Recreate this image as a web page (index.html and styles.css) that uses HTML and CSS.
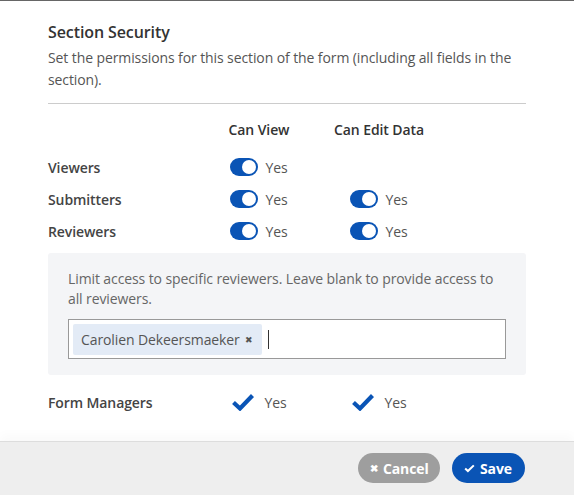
FILE: index.html
```html
<!DOCTYPE html>
<html lang="en">
<head>
<meta charset="utf-8">
<title>Section Security</title>
<link rel="stylesheet" href="styles.css">
</head>
<body>
<div class="modal">
  <div class="content">
    <h2 class="title">Section Security</h2>
    <p class="desc">Set the permissions for this section of the form (including all fields in the section).</p>
    <hr class="rule">
    <div class="perms">
      <div class="head"></div>
      <div class="head center">Can View</div>
      <div class="head center">Can Edit Data</div>

      <div class="label">Viewers</div>
      <div class="cell"><span class="toggle"><span class="knob"></span></span><span class="yes">Yes</span></div>
      <div class="cell"></div>

      <div class="label">Submitters</div>
      <div class="cell"><span class="toggle"><span class="knob"></span></span><span class="yes">Yes</span></div>
      <div class="cell"><span class="toggle"><span class="knob"></span></span><span class="yes">Yes</span></div>

      <div class="label">Reviewers</div>
      <div class="cell"><span class="toggle"><span class="knob"></span></span><span class="yes">Yes</span></div>
      <div class="cell"><span class="toggle"><span class="knob"></span></span><span class="yes">Yes</span></div>
    </div>

    <div class="limit">
      <p class="limit-text">Limit access to specific reviewers. Leave blank to provide access to all reviewers.</p>
      <div class="picker">
        <span class="tag">Carolien Dekeersmaeker <span class="tag-x">&#x2716;</span></span>
        <span class="caret"></span>
      </div>
    </div>

    <div class="perms managers">
      <div class="label">Form Managers</div>
      <div class="cell">
        <svg class="check" viewBox="0 0 24 18" width="24" height="18"><path d="M2.5 9.5 L9 15.5 L21.5 2.5" fill="none" stroke="#0a54b5" stroke-width="4.2" stroke-linejoin="miter" stroke-linecap="butt"/></svg>
        <span class="yes">Yes</span>
      </div>
      <div class="cell">
        <svg class="check" viewBox="0 0 24 18" width="24" height="18"><path d="M2.5 9.5 L9 15.5 L21.5 2.5" fill="none" stroke="#0a54b5" stroke-width="4.2" stroke-linejoin="miter" stroke-linecap="butt"/></svg>
        <span class="yes">Yes</span>
      </div>
    </div>
  </div>
  <div class="footer">
    <button class="btn btn-cancel"><span class="btn-ico">&#x2716;</span>Cancel</button>
    <button class="btn btn-save"><svg class="btn-svg" viewBox="0 0 14 12" width="13" height="11"><path d="M1.5 6 L5 9.3 L12.5 2" fill="none" stroke="#fff" stroke-width="2.6"/></svg>Save</button>
  </div>
</div>
</body>
</html>
```

FILE: styles.css
```css
* { box-sizing: border-box; }
html, body { margin: 0; padding: 0; background: #fff; }
body {
  font-family: "Open Sans", "Noto Sans", sans-serif;
  font-size: 14px;
  letter-spacing: -0.1px;
  color: #555;
}
.modal {
  width: 574px;
  height: 495px;
  border-top: 1px solid #666;
  display: flex;
  flex-direction: column;
}
.content {
  flex: 1;
  padding: 20px 48px 0 48px;
}
.title {
  margin: 0;
  font-size: 16px;
  line-height: 22px;
  font-weight: 600;
  color: #333;
}
.desc {
  margin: 4px 0 0 0;
  line-height: 22px;
  color: #555;
}
.rule {
  margin: 12px 0 0 0;
  border: 0;
  border-top: 1px solid #ccc;
}
.perms {
  display: grid;
  grid-template-columns: 151px 120px 120px;
  margin-top: 16px;
}
.head {
  font-weight: 600;
  color: #333;
  line-height: 20px;
  margin-bottom: 11px;
}
.center { text-align: center; }
.label {
  font-weight: 600;
  color: #444;
  height: 32px;
  display: flex;
  align-items: center;
}
.cell {
  height: 32px;
  display: flex;
  align-items: center;
  justify-content: center;
  gap: 7px;
}
.toggle {
  width: 28px;
  height: 18px;
  border-radius: 9px;
  background: #0a54b5;
  position: relative;
  display: inline-block;
}
.knob {
  position: absolute;
  right: 2px;
  top: 2px;
  width: 14px;
  height: 14px;
  border-radius: 50%;
  background: #fff;
}
.yes { color: #555; }
.limit {
  margin-top: 6px;
  background: #f4f5f7;
  border-radius: 3px;
  padding: 16px 20px 16px 20px;
}
.limit-text {
  margin: 0;
  line-height: 20px;
  color: #666;
}
.picker {
  margin-top: 10px;
  height: 40px;
  background: #fff;
  border: 1px solid #999;
  display: flex;
  align-items: center;
  padding-left: 4px;
}
.tag {
  background: #e3ebf6;
  border-radius: 2px;
  height: 31px;
  display: inline-flex;
  align-items: center;
  padding: 0 9px 0 8px;
  color: #555;
  gap: 5px;
}
.tag-x {
  font-size: 9px;
  color: #555;
}
.caret {
  width: 1px;
  height: 19px;
  background: #333;
  margin-left: 6px;
}
.managers {
  margin-top: 11px;
}
.check { margin-right: 2px; }
.footer {
  height: 54px;
  background: #eee;
  border-top: 1px solid #ddd;
  box-shadow: 0 -6px 10px rgba(0, 0, 0, 0.025);
  display: flex;
  justify-content: flex-end;
  align-items: flex-start;
  padding: 11px 49px 0 0;
  gap: 12px;
}
.btn {
  height: 30px;
  border: 0;
  border-radius: 15px;
  color: #fff;
  font-family: inherit;
  font-size: 14px;
  font-weight: 700;
  letter-spacing: -0.1px;
  display: inline-flex;
  align-items: center;
  padding: 0 13px 0 12px;
  gap: 5px;
}
.btn-cancel { background: #9e9e9e; width: 82px; }
.btn-save { background: #0a54b5; width: 73px; }
.btn-ico { font-size: 10px; }
```
